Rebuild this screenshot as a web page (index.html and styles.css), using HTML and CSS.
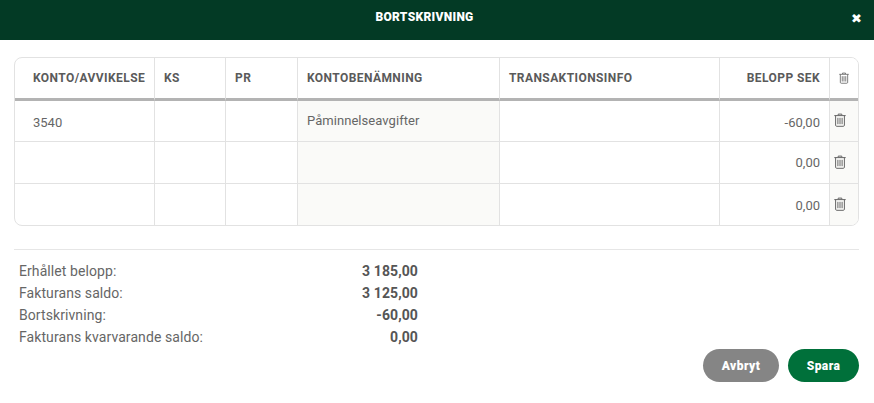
FILE: index.html
```html
<!DOCTYPE html>
<html lang="sv">
<head>
    <meta charset="UTF-8">
    <title>Bortskrivning</title>
    <link rel="stylesheet" href="styles.css">
</head>
<body>
    <svg class="icon-defs" width="0" height="0">
        <symbol id="trash" viewBox="0 0 12 14">
            <path d="M4.2 2.2V1.1h3.6v1.1M.3 2.6h11.4M1.6 2.6v9.6c0 .7.4 1.1 1.1 1.1h6.6c.7 0 1.1-.4 1.1-1.1V2.6M3.9 4.8v6.4M6 4.8v6.4M8.1 4.8v6.4" fill="none" stroke="currentColor" stroke-width="1"/>
        </symbol>
    </svg>

    <header class="modal-header">
        <h1>BORTSKRIVNING</h1>
        <span class="close">✖</span>
    </header>

    <main class="modal-body">
        <div class="table-wrap">
            <table>
                <colgroup>
                    <col class="col-konto">
                    <col class="col-ks">
                    <col class="col-pr">
                    <col class="col-namn">
                    <col class="col-info">
                    <col class="col-belopp">
                    <col class="col-del">
                </colgroup>
                <thead>
                    <tr>
                        <th class="first">KONTO/AVVIKELSE</th>
                        <th>KS</th>
                        <th>PR</th>
                        <th>KONTOBENÄMNING</th>
                        <th>TRANSAKTIONSINFO</th>
                        <th class="right">BELOPP SEK</th>
                        <th class="del"><svg class="trash small"><use href="#trash"/></svg></th>
                    </tr>
                </thead>
                <tbody>
                    <tr class="row-first">
                        <td class="first">3540</td>
                        <td></td>
                        <td></td>
                        <td class="readonly name">Påminnelseavgifter</td>
                        <td></td>
                        <td class="right">-60,00</td>
                        <td class="del"><svg class="trash"><use href="#trash"/></svg></td>
                    </tr>
                    <tr>
                        <td class="first"></td>
                        <td></td>
                        <td></td>
                        <td class="readonly"></td>
                        <td></td>
                        <td class="right">0,00</td>
                        <td class="del"><svg class="trash"><use href="#trash"/></svg></td>
                    </tr>
                    <tr>
                        <td class="first"></td>
                        <td></td>
                        <td></td>
                        <td class="readonly"></td>
                        <td></td>
                        <td class="right">0,00</td>
                        <td class="del"><svg class="trash"><use href="#trash"/></svg></td>
                    </tr>
                </tbody>
            </table>
        </div>

        <section class="summary">
            <div class="summary-row"><span>Erhållet belopp:</span><b>3 185,00</b></div>
            <div class="summary-row"><span>Fakturans saldo:</span><b>3 125,00</b></div>
            <div class="summary-row"><span>Bortskrivning:</span><b>-60,00</b></div>
            <div class="summary-row"><span>Fakturans kvarvarande saldo:</span><b>0,00</b></div>
        </section>

        <div class="actions">
            <button class="btn btn-cancel">Avbryt</button>
            <button class="btn btn-save">Spara</button>
        </div>
    </main>
</body>
</html>
```

FILE: styles.css
```css
* {
    margin: 0;
    padding: 0;
    box-sizing: border-box;
}
body {
    font-family: Roboto, sans-serif;
    font-size: 13px;
    color: #555;
    background-color: #fff;
    overflow: hidden;
}
.icon-defs {
    display: block;
    height: 0;
}
.modal-header {
    display: flex;
    justify-content: center;
    height: 40px;
    padding-right: 25px;
    background-color: #033a25;
    color: #fff;
    position: relative;
}
.modal-header h1 {
    font-size: 12px;
    font-weight: 900;
    line-height: 34px;
    letter-spacing: 0.3px;
}
.close {
    position: absolute;
    right: 12px;
    top: 11px;
    font-size: 13px;
    line-height: 16px;
    font-family: "DejaVu Sans", sans-serif;
}
.modal-body {
    padding: 17px 15px 0 14px;
}
.table-wrap {
    border: 1px solid #e2e2e2;
    border-radius: 8px;
    overflow: hidden;
    height: 169px;
}
table {
    border-collapse: separate;
    border-spacing: 0;
    table-layout: fixed;
    width: 844px;
}
.col-konto { width: 140px; }
.col-ks { width: 71px; }
.col-pr { width: 72px; }
.col-namn { width: 202px; }
.col-info { width: 220px; }
.col-belopp { width: 110px; }
.col-del { width: 29px; }
th, td {
    border-right: 1px solid #e2e2e2;
    padding: 0 9px;
    text-align: left;
}
th:last-child, td:last-child {
    border-right: none;
}
th {
    height: 43px;
    font-size: 12px;
    font-weight: 700;
    letter-spacing: 0.42px;
    color: #5a5a5a;
    border-bottom: 3px solid #b3b3b3;
}
td {
    height: 42px;
    border-bottom: 1px solid #e2e2e2;
    font-size: 13px;
    color: #666;
}
.row-first td {
    height: 41px;
    padding-top: 2px;
}
tbody tr:last-child td {
    border-bottom: none;
}
th.first, td.first {
    padding-left: 18px;
}
.right, th.right {
    text-align: right;
    padding-right: 9px;
}
.readonly {
    background-color: #fafaf8;
}
.row-first .name {
    padding-top: 0;
    padding-bottom: 2px;
    letter-spacing: 0.05px;
}
.del, .row-first .del {
    padding: 0;
    text-align: center;
    background-color: #fafaf8;
    color: #666;
}
th.del {
    background-color: #fff;
}
.trash {
    display: block;
    width: 12px;
    height: 14px;
    margin: 0 0 2px 4px;
}
.trash.small {
    width: 10px;
    height: 12px;
    margin: 0 0 0 9px;
}
.summary {
    margin-top: 23px;
    border-top: 1px solid #e6e6e6;
    padding: 10px 0 0 5px;
}
.summary-row {
    display: flex;
    justify-content: space-between;
    width: 399px;
    font-size: 14px;
    line-height: 22px;
    color: #666;
    letter-spacing: 0.08px;
}
.summary-row b {
    color: #555;
    font-weight: 700;
    letter-spacing: 0.1px;
}
.actions {
    display: flex;
    justify-content: flex-end;
    gap: 9px;
    margin-top: 1px;
}
.btn {
    height: 33px;
    border: none;
    border-radius: 17px;
    color: #fff;
    font-family: Roboto, sans-serif;
    font-size: 12px;
    font-weight: 900;
    letter-spacing: 0.45px;
}
.btn-cancel {
    width: 76px;
    background-color: #858585;
}
.btn-save {
    width: 71px;
    background-color: #00703a;
}
```
